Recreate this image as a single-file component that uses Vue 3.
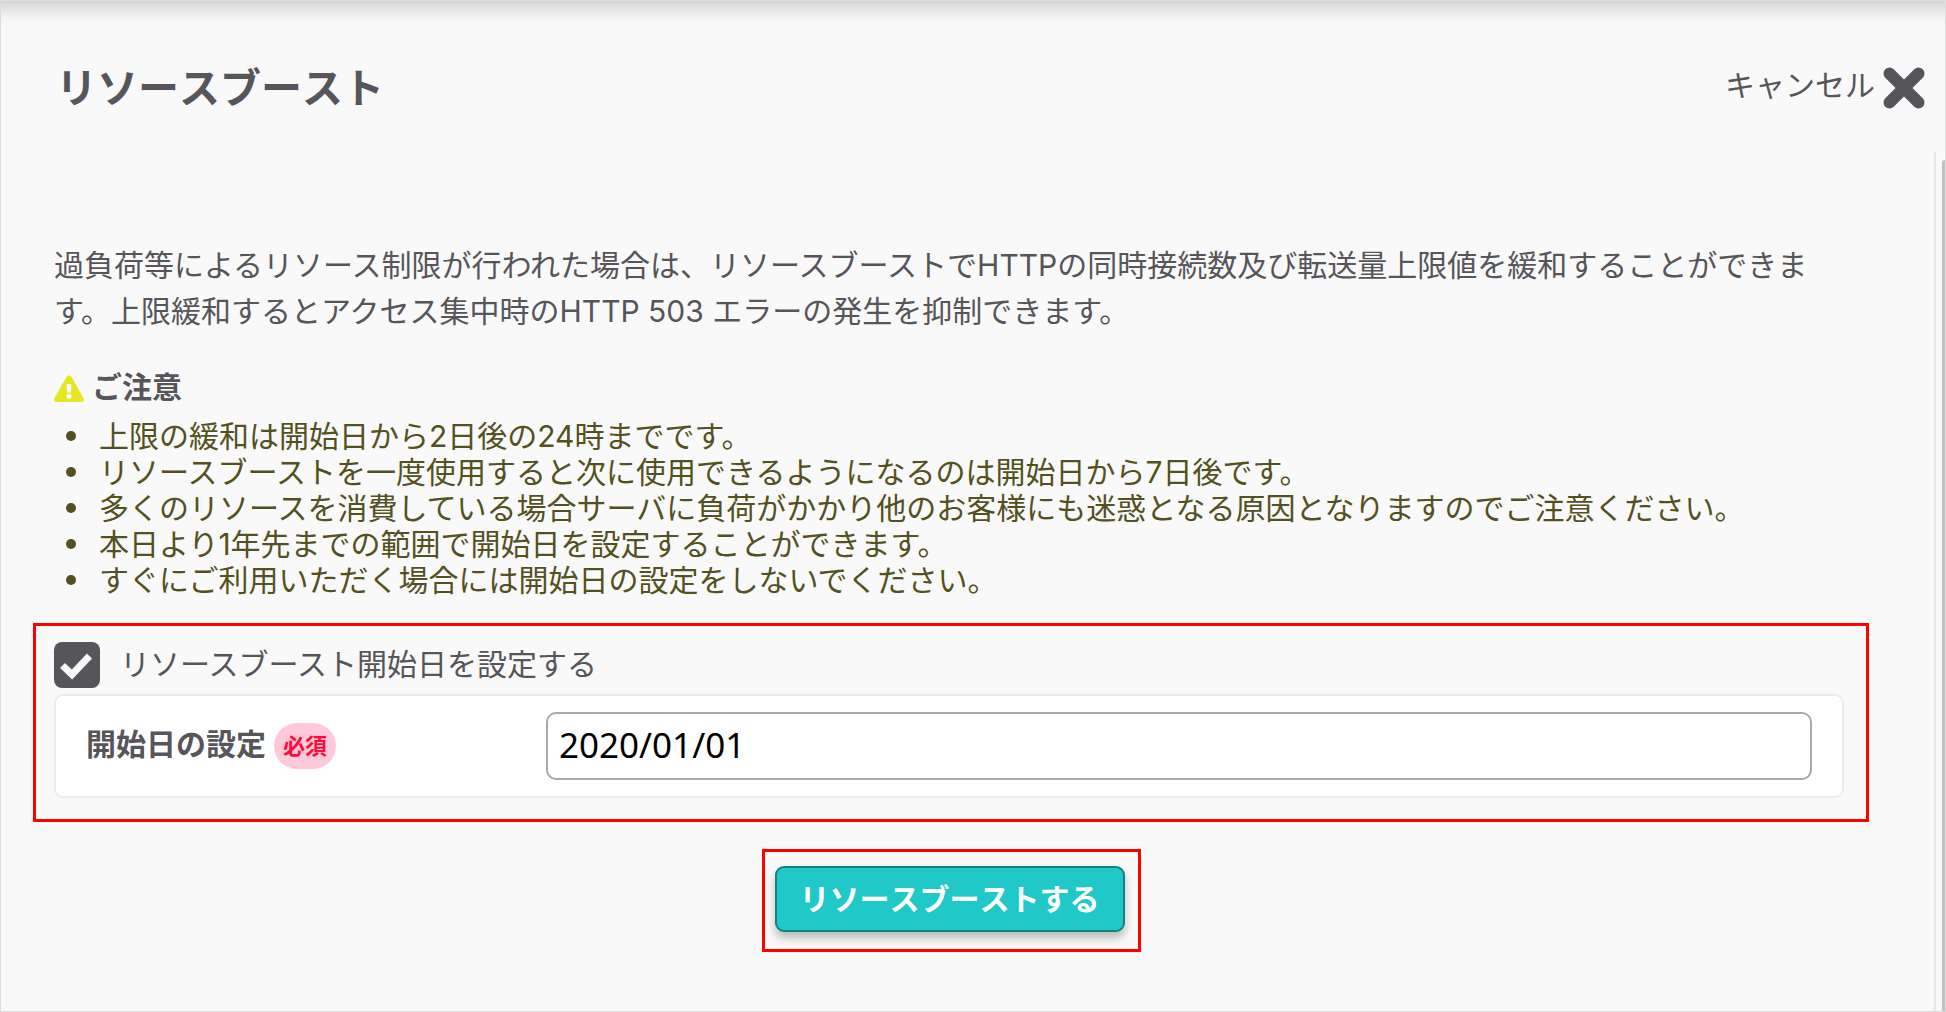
<script setup>
import { ref } from 'vue'

const setStartDate = ref(true)
const startDate = ref('2020/01/01')
const notes = [
  '上限の緩和は開始日から2日後の24時までです。',
  'リソースブーストを一度使用すると次に使用できるようになるのは開始日から7日後です。',
  '多くのリソースを消費している場合サーバに負荷がかかり他のお客様にも迷惑となる原因となりますのでご注意ください。',
  '本日より1年先までの範囲で開始日を設定することができます。',
  'すぐにご利用いただく場合には開始日の設定をしないでください。',
]
</script>

<template>
  <div class="dialog">
    <header class="head">
      <h1>リソースブースト</h1>
      <button type="button" class="cancel">
        キャンセル
        <svg viewBox="0 0 42 42" aria-hidden="true">
          <path d="M6.500 6.500L35.500 35.500M35.500 6.500L6.500 35.500" />
        </svg>
      </button>
    </header>

    <div class="scroller">
      <main class="body">
        <p class="lead">
          過負荷等によるリソース制限が行われた場合は、リソースブーストでHTTPの同時接続数及び転送量上限値を緩和することができます。上限緩和するとアクセス集中時のHTTP 503 エラーの発生を抑制できます。
        </p>

        <h2>
          <svg viewBox="0 0 30 27" aria-hidden="true">
            <path class="tri" d="M12.500 1.800Q15 -1.500 17.500 1.800L29.400 23Q31 27 27.500 27H2.500Q-1 27 0.600 23Z" />
            <path class="mark" d="M12.600 9h4.800l-.5 8.600h-3.800z" />
            <circle class="mark" cx="15" cy="21.200" r="2.500" />
          </svg>
          ご注意
        </h2>
        <ul>
          <li v-for="note in notes" :key="note">{{ note }}</li>
        </ul>

        <section class="outlined settings">
          <label class="check">
            <input v-model="setStartDate" type="checkbox" />
            <svg viewBox="0 0 46 46" aria-hidden="true"><path d="M8.500 23.500L18 32.500L35.500 14" /></svg>
            <span>リソースブースト開始日を設定する</span>
          </label>
          <div class="field">
            <label for="start-date">開始日の設定<span class="required">必須</span></label>
            <input id="start-date" v-model="startDate" type="text" />
          </div>
        </section>

        <div class="outlined action">
          <button type="button" class="submit">リソースブーストする</button>
        </div>
      </main>
      <div class="track"><div class="thumb"></div></div>
    </div>
  </div>
</template>

<style>
body {
  margin: 0;
}
</style>

<style scoped>
.dialog,
.dialog * {
  box-sizing: border-box;
}
.dialog {
  display: flex;
  flex-direction: column;
  min-height: 100vh;
  border: 1px solid #dcdcdc;
  background: #f9f9f9 linear-gradient(#d3d3d3, #dedede 5px, #ededed 12px, #f6f6f6 20px, #f9f9f9 26px) no-repeat;
  color: #565559;
  font: 30px/36px Inter, "Noto Sans CJK JP", sans-serif;
}
.head {
  display: flex;
  align-items: flex-start;
  justify-content: space-between;
  height: 151px;
  padding: 56px 20px 0 55px;
}
h1 {
  margin: 0;
  font-size: 41px;
  line-height: 62px;
  font-weight: 700;
  font-kerning: none;
}
.cancel {
  display: flex;
  align-items: flex-start;
  gap: 8px;
  margin-top: 10px;
  padding: 0;
  border: 0;
  background: none;
  color: inherit;
  font: inherit;
}
.cancel svg {
  width: 42px;
  height: 42px;
  stroke: #565559;
  stroke-width: 12;
  stroke-linecap: round;
}
.scroller {
  display: flex;
  flex: 1;
}
.body {
  flex: 1;
  padding: 90px 65px 57px 32px;
}
.lead {
  margin: 0 36px 0 21px;
  line-height: 46px;
}
h2 {
  display: flex;
  align-items: center;
  gap: 8px;
  margin: 35px 21px 13px;
  font-size: 30px;
  line-height: 36px;
}
h2 svg {
  width: 30px;
  height: 27px;
  margin-top: 3px;
}
.tri {
  fill: #e5e720;
}
.mark {
  fill: #f9f9f9;
}
ul {
  margin: 0 21px;
  padding: 0;
  color: #53511d;
  list-style: none;
}
li {
  display: flex;
  align-items: center;
  gap: 23px;
  padding-left: 12px;
}
li::before {
  content: "";
  flex: none;
  width: 10px;
  height: 10px;
  border-radius: 50%;
  background: currentColor;
}
.outlined {
  border: 3px solid #f00;
}
.settings {
  margin-top: 25px;
  padding: 16px 22px 21px 18px;
}
.check {
  position: relative;
  display: flex;
  align-items: center;
  gap: 20px;
}
.check span {
  padding-bottom: 2px;
}
.check input {
  flex: none;
  width: 46px;
  height: 46px;
  margin: 0;
  border-radius: 8px;
  appearance: none;
  background: #565559;
}
.check svg {
  position: absolute;
  left: 0;
  top: 0;
  width: 46px;
  height: 46px;
  fill: none;
  stroke: #f9f9f9;
  stroke-width: 7;
}
.check input:not(:checked) + svg {
  display: none;
}
.field {
  display: flex;
  align-items: center;
  margin-top: 6px;
  padding: 16px 30px;
  border: 2px solid #ebebeb;
  border-radius: 9px;
  background: #fff;
}
.field label {
  display: flex;
  align-items: flex-start;
  flex: 0 0 460px;
  gap: 8px;
  font-weight: 700;
  line-height: 42px;
}
.required {
  padding: 0 9px;
  border-radius: 23px;
  background: #ffc9d9;
  color: #ff0a3c;
  font-size: 22px;
  line-height: 46px;
}
.field input {
  flex: 1;
  min-width: 0;
  height: 68px;
  padding: 0 11px 4px;
  border: 2px solid #a9a8ad;
  border-radius: 10px;
  background: #fff;
  color: #000;
  font: 35px "Noto Sans", sans-serif;
}
.action {
  width: fit-content;
  margin: 27px auto 0;
  padding: 14px 13px 17px 10px;
}
.submit {
  display: block;
  height: 66px;
  padding: 0 23px 4px;
  border: 2px solid #12817f;
  border-radius: 9px;
  background: #20c8c8;
  box-shadow: 0 6px 8px rgba(0, 0, 0, 0.25);
  color: #fff;
  font-family: inherit;
  font-size: 30px;
  font-weight: 700;
  font-kerning: none;
}
.track {
  display: flex;
  width: 11px;
  padding: 8px 0 0 6px;
  border-left: 2px solid #e8e8e8;
  background: #fafafa;
}
.thumb {
  flex: 1;
  border-radius: 6px 0 0 0;
  background: #c1c1c1;
}
</style>
